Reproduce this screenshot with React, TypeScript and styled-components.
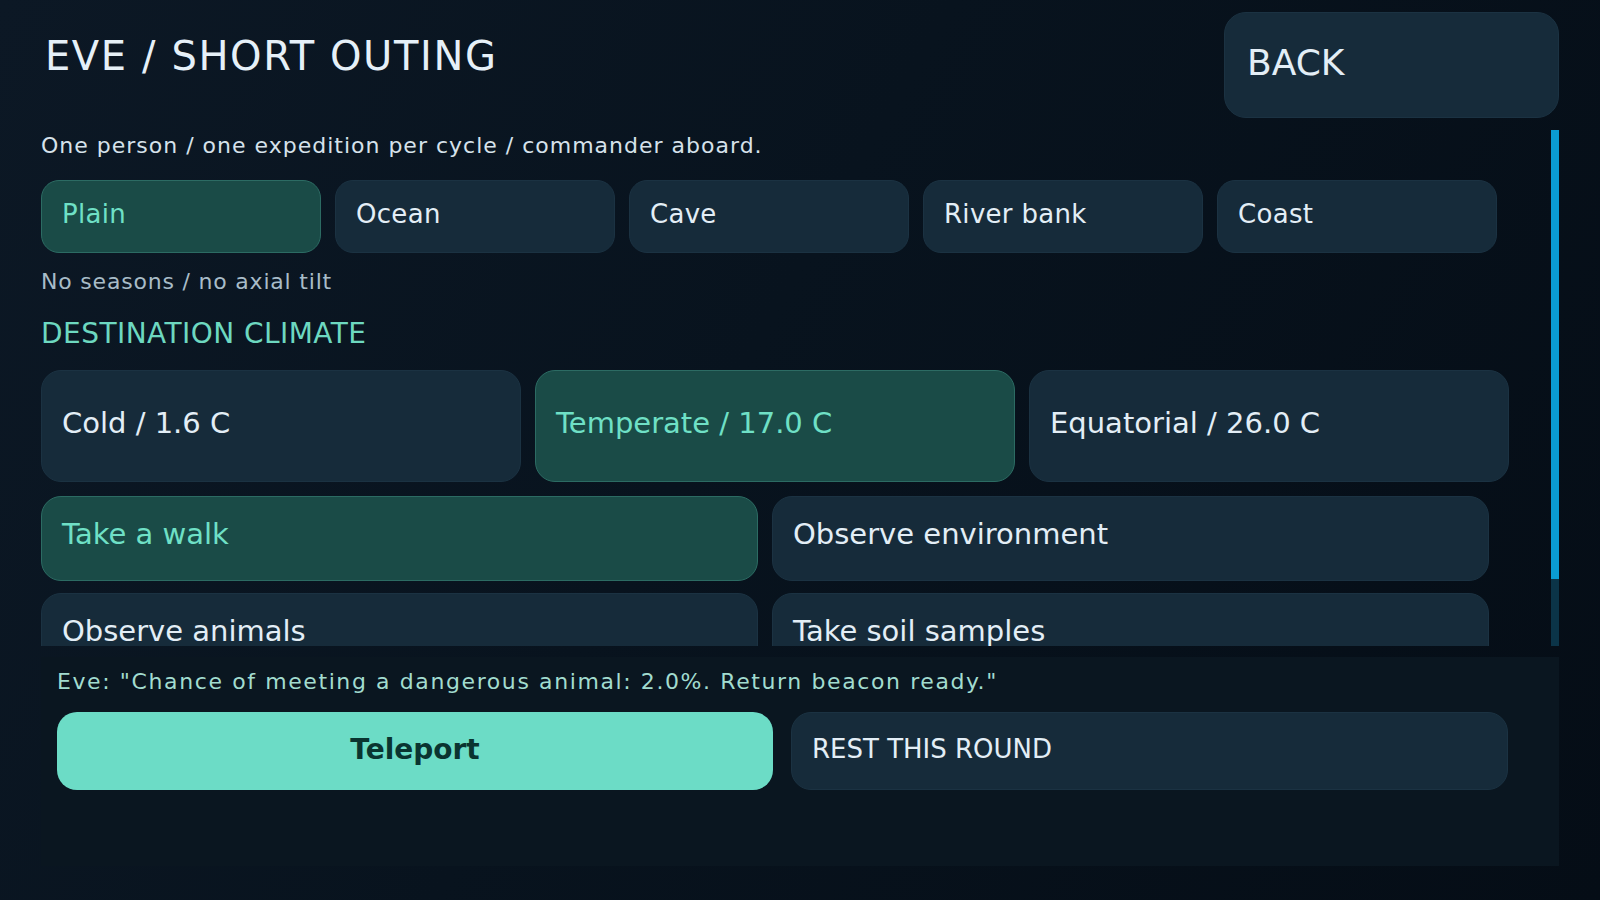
import styled, { createGlobalStyle, css } from 'styled-components';

const GlobalStyle = createGlobalStyle`
  html, body {
    margin: 0;
    padding: 0;
    background: #07111b;
  }
  * {
    box-sizing: border-box;
  }
`;

const Screen = styled.div`
  width: 1600px;
  height: 900px;
  padding: 12px 41px 34px 41px;
  display: flex;
  flex-direction: column;
  font-family: 'DejaVu Sans', 'Liberation Sans', sans-serif;
  color: #e3eef6;
  background: linear-gradient(120deg, #0c1825 0%, #08131e 45%, #050d16 100%);
  overflow: hidden;
`;

const Header = styled.header`
  display: flex;
  justify-content: space-between;
  align-items: flex-start;
  height: 106px;
  flex-shrink: 0;
`;

const Title = styled.h1`
  margin: 21px 0 0 4px;
  font-size: 40px;
  font-weight: 400;
  letter-spacing: 1.6px;
  line-height: 46px;
  color: #e6f0f8;
`;

const Button = styled.button<{ $active?: boolean }>`
  display: flex;
  align-items: center;
  border: 1.5px solid #1b3242;
  background: #162b3a;
  color: #e3eef6;
  font-family: inherit;
  font-weight: 400;
  text-align: left;
  padding: 0 20px 6px;
  cursor: pointer;
  ${(p) =>
    p.$active &&
    css`
      background: #1a4b47;
      border-color: #2c6b63;
      color: #6fe0c6;
    `}
`;

const BackButton = styled(Button)`
  width: 335px;
  height: 106px;
  border-radius: 22px;
  padding-left: 22px;
  font-size: 36px;
`;

const ScrollArea = styled.div`
  margin-top: 12px;
  height: 516px;
  display: flex;
  flex-shrink: 0;
`;

const ScrollContent = styled.div`
  flex: 1;
  overflow: hidden;
  padding-top: 3px;
`;

const Track = styled.div`
  width: 8px;
  background: #0b3448;
  display: flex;
  flex-direction: column;
`;

const Thumb = styled.div`
  background: #0a9bd2;
`;

const Note = styled.p<{ $muted?: boolean }>`
  margin: 0;
  font-size: 22px;
  line-height: 26px;
  letter-spacing: ${(p) => (p.$muted ? '0.8px' : '1px')};
  color: ${(p) => (p.$muted ? '#a8bcc8' : '#d6e2eb')};
`;

const TabRow = styled.div`
  display: grid;
  grid-template-columns: repeat(5, 280px);
  gap: 14px;
  margin: 21px 0 16px;
`;

const Tab = styled(Button)`
  height: 73px;
  border-radius: 18px;
  font-size: 26px;
  letter-spacing: 0.3px;
  padding-left: 20px;
`;

const SectionTitle = styled.h2`
  margin: 22px 0 20px;
  font-size: 28px;
  font-weight: 400;
  line-height: 33px;
  letter-spacing: 0.45px;
  color: #6dd8c0;
`;

const ClimateRow = styled.div`
  display: grid;
  grid-template-columns: repeat(3, 480px);
  gap: 14px;
`;

const ClimateButton = styled(Button)`
  height: 112px;
  border-radius: 20px;
  font-size: 29px;
  padding-left: 20px;
`;

const ActionGrid = styled.div`
  display: grid;
  grid-template-columns: repeat(2, 717px);
  column-gap: 14px;
  row-gap: 12px;
  margin-top: 14px;
`;

const ActionButton = styled(Button)`
  height: 85px;
  border-radius: 20px;
  font-size: 29px;
  padding-left: 20px;
  padding-bottom: 9px;
`;

const Panel = styled.section`
  margin-top: 11px;
  height: 209px;
  flex-shrink: 0;
  background: #0a1620;
  padding: 12px 16px;
`;

const Speech = styled.p`
  margin: 0;
  font-size: 22px;
  line-height: 26px;
  letter-spacing: 1.6px;
  color: #a2dccf;
`;

const FooterRow = styled.div`
  display: grid;
  grid-template-columns: 716px 717px;
  gap: 18px;
  margin-top: 17px;
`;

const Teleport = styled.button`
  height: 78px;
  border: none;
  border-radius: 20px;
  background: #6cdcc6;
  color: #0a3430;
  font-family: inherit;
  font-size: 28px;
  font-weight: 700;
  padding-bottom: 4px;
  cursor: pointer;
`;

const RestButton = styled(Button)`
  height: 78px;
  border-radius: 20px;
  font-size: 26px;
  padding-left: 20px;
  padding-bottom: 4px;
`;

const terrains = ['Plain', 'Ocean', 'Cave', 'River bank', 'Coast'];
const climates = ['Cold / 1.6 C', 'Temperate / 17.0 C', 'Equatorial / 26.0 C'];
const actions = ['Take a walk', 'Observe environment', 'Observe animals', 'Take soil samples'];

const VIEW_HEIGHT = 516;
const THUMB_RATIO = 0.87;

export default function App() {
  const thumb = Math.round(VIEW_HEIGHT * THUMB_RATIO);
  return (
    <Screen>
      <GlobalStyle />
      <Header>
        <Title>EVE / SHORT OUTING</Title>
        <BackButton>BACK</BackButton>
      </Header>

      <ScrollArea>
        <ScrollContent>
          <Note>One person / one expedition per cycle / commander aboard.</Note>
          <TabRow>
            {terrains.map((t) => (
              <Tab key={t} $active={t === 'Plain'}>{t}</Tab>
            ))}
          </TabRow>
          <Note $muted>No seasons / no axial tilt</Note>
          <SectionTitle>DESTINATION CLIMATE</SectionTitle>
          <ClimateRow>
            {climates.map((c) => (
              <ClimateButton key={c} $active={c.startsWith('Temperate')}>{c}</ClimateButton>
            ))}
          </ClimateRow>
          <ActionGrid>
            {actions.map((a) => (
              <ActionButton key={a} $active={a === 'Take a walk'}>{a}</ActionButton>
            ))}
          </ActionGrid>
        </ScrollContent>
        <Track>
          <Thumb style={{ height: thumb }} />
        </Track>
      </ScrollArea>

      <Panel>
        <Speech>Eve: "Chance of meeting a dangerous animal: 2.0%. Return beacon ready."</Speech>
        <FooterRow>
          <Teleport>Teleport</Teleport>
          <RestButton>REST THIS ROUND</RestButton>
        </FooterRow>
      </Panel>
    </Screen>
  );
}
